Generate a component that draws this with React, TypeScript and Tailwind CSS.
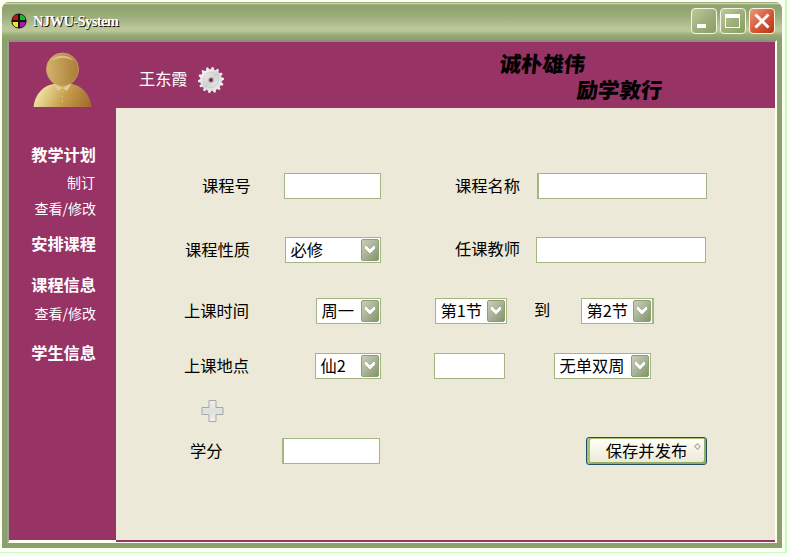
import React from "react";

const cjk = "font-['Noto_Sans_CJK_SC','Noto_Sans',sans-serif]";

function Label({ className = "", children }: { className?: string; children: React.ReactNode }) {
  return <span className={`block h-[26px] shrink-0 whitespace-nowrap text-[16.3px] leading-[24px] text-black ${className}`}>{children}</span>;
}

function Field({ className = "" }: { className?: string }) {
  return <input className={`block h-[26px] shrink-0 border border-[#a5b583] bg-white outline-none ${className}`} />;
}

function Select({ className = "", value }: { className?: string; value: string }) {
  return (
    <div className={`flex h-[26px] shrink-0 items-center justify-between border border-[#a5b583] bg-white pr-px pl-[4.500px] ${className}`}>
      <span className="h-[24px] text-[16.3px] leading-[23px] whitespace-nowrap text-black">{value}</span>
      <span className="flex h-[22px] w-[18px] shrink-0 items-center justify-center rounded-[2px] border border-[#8b9f72] bg-linear-to-br from-[#c9cdb9] via-[#a9b397] to-[#82946b]">
        <svg width="12" height="8" viewBox="0 0 12 8" shapeRendering="crispEdges">
          <path d="M1 0h2v1h1v1h1v1h2v-1h1v-1h1v-1h2v3h-1v1h-1v1h-1v1h-1v1h-2v-1h-1v-1h-1v-1h-1v-1h-1z" fill="#fff" />
        </svg>
      </span>
    </div>
  );
}

function Avatar() {
  return (
    <svg width="59" height="55" viewBox="0 0 59 55">
      <defs>
        <linearGradient id="body" x1="0" y1="0.7" x2="1" y2="0.9">
          <stop offset="0" stopColor="#eee6a4" />
          <stop offset="0.5" stopColor="#c69d4c" />
          <stop offset="1" stopColor="#a1692b" />
        </linearGradient>
        <linearGradient id="head" x1="0" x2="1">
          <stop offset="0" stopColor="#d0b46a" />
          <stop offset="1" stopColor="#ac7b38" />
        </linearGradient>
      </defs>
      <path d="M0.500 55C2 42 10 34 20 32h19c10 2 18 10 19.500 23z" fill="url(#body)" />
      <path d="M3 49c2-7 8-13 16-15.500" stroke="#ecdca2" strokeWidth="1" fill="none" opacity=".7" />
      <path d="M13.500 17a16 16 0 0 1 32 0c0 9-7 17-16 17s-16-8-16-17z" fill="url(#head)" stroke="#d1ac61" strokeWidth=".7" />
      <path d="M18 9c5-7 18-7 23 0-7-4-16-4-23 0z" fill="#e9d3a4" opacity=".65" />
      <path d="M20.500 31.500l9 4.500-4.500 3zM38.500 31.500l-9 4.500 4.500 3z" fill="#dccda5" />
      <path d="M29.500 39v15" stroke="#e7cd8b" strokeWidth="1" strokeDasharray="1 4" />
    </svg>
  );
}

function Gear() {
  return (
    <svg width="28" height="28" viewBox="-14 -14 28 28">
      <defs>
        <linearGradient id="gear" x1="0" y1="0" x2="1" y2="1">
          <stop offset="0" stopColor="#ffffff" />
          <stop offset=".5" stopColor="#d2d2d2" />
          <stop offset="1" stopColor="#f3f3f3" />
        </linearGradient>
      </defs>
      {Array.from({ length: 14 }, (_, i) => (
        <path key={i} d="M-2.400-9L-.8-13h1.600L2.400-9z" fill="#f0eeef" transform={`rotate(${(i * 360) / 14 + 8})`} />
      ))}
      <circle r="10.800" fill="url(#gear)" />
      <circle r="7.500" fill="none" stroke="#c9c7c8" strokeWidth=".7" />
      <circle r="2.200" fill="#7d2854" stroke="#999" strokeWidth=".6" />
    </svg>
  );
}

function Logo() {
  return (
    <svg width="16" height="16" viewBox="0 0 16 16">
      <circle cx="8" cy="8" r="7.600" fill="#111" />
      <path d="M7 7V1.500A6 6 0 0 0 1.500 7z" fill="#c90d19" />
      <path d="M9 7V1.500A6 6 0 0 1 14.500 7z" fill="#17b52a" />
      <path d="M7 9v5.500A6 6 0 0 1 1.500 9z" fill="#f2e51a" />
      <path d="M9 9v5.500A6 6 0 0 0 14.500 9z" fill="#a51cad" />
    </svg>
  );
}

const control = "flex size-[26px] shrink-0 items-center justify-center rounded-[4px] border border-[#f4f5e4]";

function TitleBar() {
  return (
    <header className="flex h-[38px] shrink-0 items-center rounded-t-[7px] bg-[linear-gradient(180deg,#8ca06d_0px,#c8d4a8_1.5px,#90a36f_3px,#91a56f_8px,#a0b07f_16px,#bcc798_26px,#bbc798_29px,#98aa76_33px,#8b9f6b_38px)] pr-[7px] pl-[9px]">
      <Logo />
      <h1 className="ml-[6px] font-['Liberation_Serif',serif] text-[14.500px] leading-[20px] font-bold tracking-[-0.6px] text-white [text-shadow:1px_1px_0_#111]">
        NJWU-System
      </h1>
      <div className="ml-auto flex gap-[3px]">
        <button className={`${control} bg-linear-to-br from-[#bdc99c] via-[#a0b07c] to-[#889d62]`}>
          <svg width="24" height="24" viewBox="0 0 24 24"><path d="M5 15h9v4H5z" fill="#fff" /></svg>
        </button>
        <button className={`${control} bg-linear-to-br from-[#bdc99c] via-[#a0b07c] to-[#889d62]`}>
          <svg width="24" height="24" viewBox="0 0 24 24"><path d="M4 5h15v14H4zM5 9v9h13V9z" fill="#fff" fillRule="evenodd" /></svg>
        </button>
        <button className={`${control} bg-linear-to-br from-[#e69a7c] via-[#d9593a] to-[#b83212]`}>
          <svg width="24" height="24" viewBox="0 0 24 24"><path d="M6.500 6.500l11 11M17.500 6.500l-11 11" stroke="#fff" strokeWidth="3" strokeLinecap="square" /></svg>
        </button>
      </div>
    </header>
  );
}

const group = "block text-[16.2px] leading-[24px] font-bold";
const entry = "block text-[14px] leading-[20px]";

function Sidebar() {
  return (
    <aside className="flex w-[107px] shrink-0 flex-col border-b-2 border-[#fdfff0] bg-[#983365] text-white">
      <div className="flex h-[66px] items-end justify-center pb-px">
        <Avatar />
      </div>
      <nav className="flex flex-col items-end pt-[34px] pr-[20px] text-right whitespace-nowrap">
        <span className={group}>教学计划</span>
        <span className={`${entry} mt-[6px] pr-px`}>制订</span>
        <span className={`${entry} mt-[6px]`}>查看/修改</span>
        <span className={`${group} mt-[13px]`}>安排课程</span>
        <span className={`${group} mt-[17px]`}>课程信息</span>
        <span className={`${entry} mt-[7px]`}>查看/修改</span>
        <span className={`${group} mt-[17px]`}>学生信息</span>
      </nav>
    </aside>
  );
}

function Banner() {
  return (
    <div className="flex h-[66px] shrink-0 bg-[#983365]">
      <span className="mt-[23px] ml-[23px] text-[16.2px] leading-[26px] whitespace-nowrap text-white">王东霞</span>
      <div className="mt-[24px] ml-[9px]"><Gear /></div>
      <div className="mt-[8px] ml-[275px] flex flex-col text-[21.3px] leading-[26px] font-black whitespace-nowrap text-black">
        <span className="-skew-x-6">诚朴雄伟</span>
        <span className="ml-[77px] -skew-x-6">励学敦行</span>
      </div>
    </div>
  );
}

function CourseForm() {
  return (
    <form className="flex flex-col pt-[65px]">
      <div className="flex h-[26px]">
        <Label className="ml-[86px] w-[82px]">课程号</Label>
        <Field className="w-[97px]" />
        <Label className="ml-[74px] w-[82px]">课程名称</Label>
        <Field className="w-[170px] border-l-2" />
      </div>
      <div className="mt-[38px] flex h-[26px]">
        <Label className="ml-[69px] w-[100px]">课程性质</Label>
        <Select className="w-[96px]" value="必修" />
        <Label className="-mt-[1px] ml-[74px] w-[81px]">任课教师</Label>
        <Field className="w-[170px]" />
      </div>
      <div className="mt-[35px] flex h-[26px]">
        <Label className="ml-[68px] w-[132px]">上课时间</Label>
        <Select className="w-[65px]" value="周一" />
        <Select className="ml-[54px] w-[72px]" value="第1节" />
        <Label className="-mt-[1px] ml-[27px] w-[47px]">到</Label>
        <Select className="w-[73px] border-r-2" value="第2节" />
      </div>
      <div className="mt-[29px] flex h-[26px]">
        <Label className="ml-[68px] w-[131px]">上课地点</Label>
        <Select className="w-[66px]" value="仙2" />
        <Field className="ml-[53px] w-[71px]" />
        <Select className="ml-[49px] w-[97px]" value="无单双周" />
      </div>
      <svg className="mt-[20px] ml-[85px]" width="23" height="24" viewBox="0 0 23 24">
        <defs>
          <linearGradient id="plus" x1="0" y1="0" x2="0" y2="1">
            <stop offset="0" stopColor="#f0f1ec" />
            <stop offset=".5" stopColor="#dcdfda" />
            <stop offset="1" stopColor="#f2f2ed" />
          </linearGradient>
        </defs>
        <path d="M8 1.500h7v7h7v7h-7v7H8v-7H1v-7h7z" fill="url(#plus)" stroke="#a6aaa6" />
      </svg>
      <div className="mt-[15px] flex h-[26px]">
        <Label className="ml-[74px] w-[92px]">学分</Label>
        <Field className="w-[98px] border-l-2" />
        <button
          type="button"
          className="relative -mt-[1px] ml-[206px] h-[28px] w-[121px] rounded-[3px] border border-[#1f4f66] bg-linear-to-b from-[#fffff8] to-[#ece8d5] pb-[2px] text-[16.3px] leading-[24px] whitespace-nowrap text-black shadow-[inset_3px_1px_0_#a9bf75,inset_-2px_-2px_0_#94ad67]"
        >
          保存并发布
          <span className="absolute top-[6px] right-[6px] size-[5px] rotate-45 border border-[#aaa995]" />
        </button>
      </div>
    </form>
  );
}

export default function App() {
  return (
    <div className={`h-[553px] w-[787px] overflow-hidden bg-[#fdfff5] ${cjk}`}>
      <div className="h-full w-full border-r-2 border-b border-[#c4ffba] pt-[2px] pl-[2px]">
        <div className="flex h-[546px] w-[780px] flex-col overflow-hidden rounded-t-[7px] bg-[#8ba06c]">
          <TitleBar />
          <div className="ml-[5px] flex h-[503px] w-[770px] border-t-2 border-r-2 border-b border-l-2 border-t-[#918d80] border-r-[#fdfff0] border-b-[#fdfff0] border-l-[#a0a092]">
            <Sidebar />
            <main className="flex flex-1 flex-col border-b-2 border-[#983365] bg-[#ece9d8]">
              <Banner />
              <CourseForm />
            </main>
          </div>
        </div>
      </div>
    </div>
  );
}
